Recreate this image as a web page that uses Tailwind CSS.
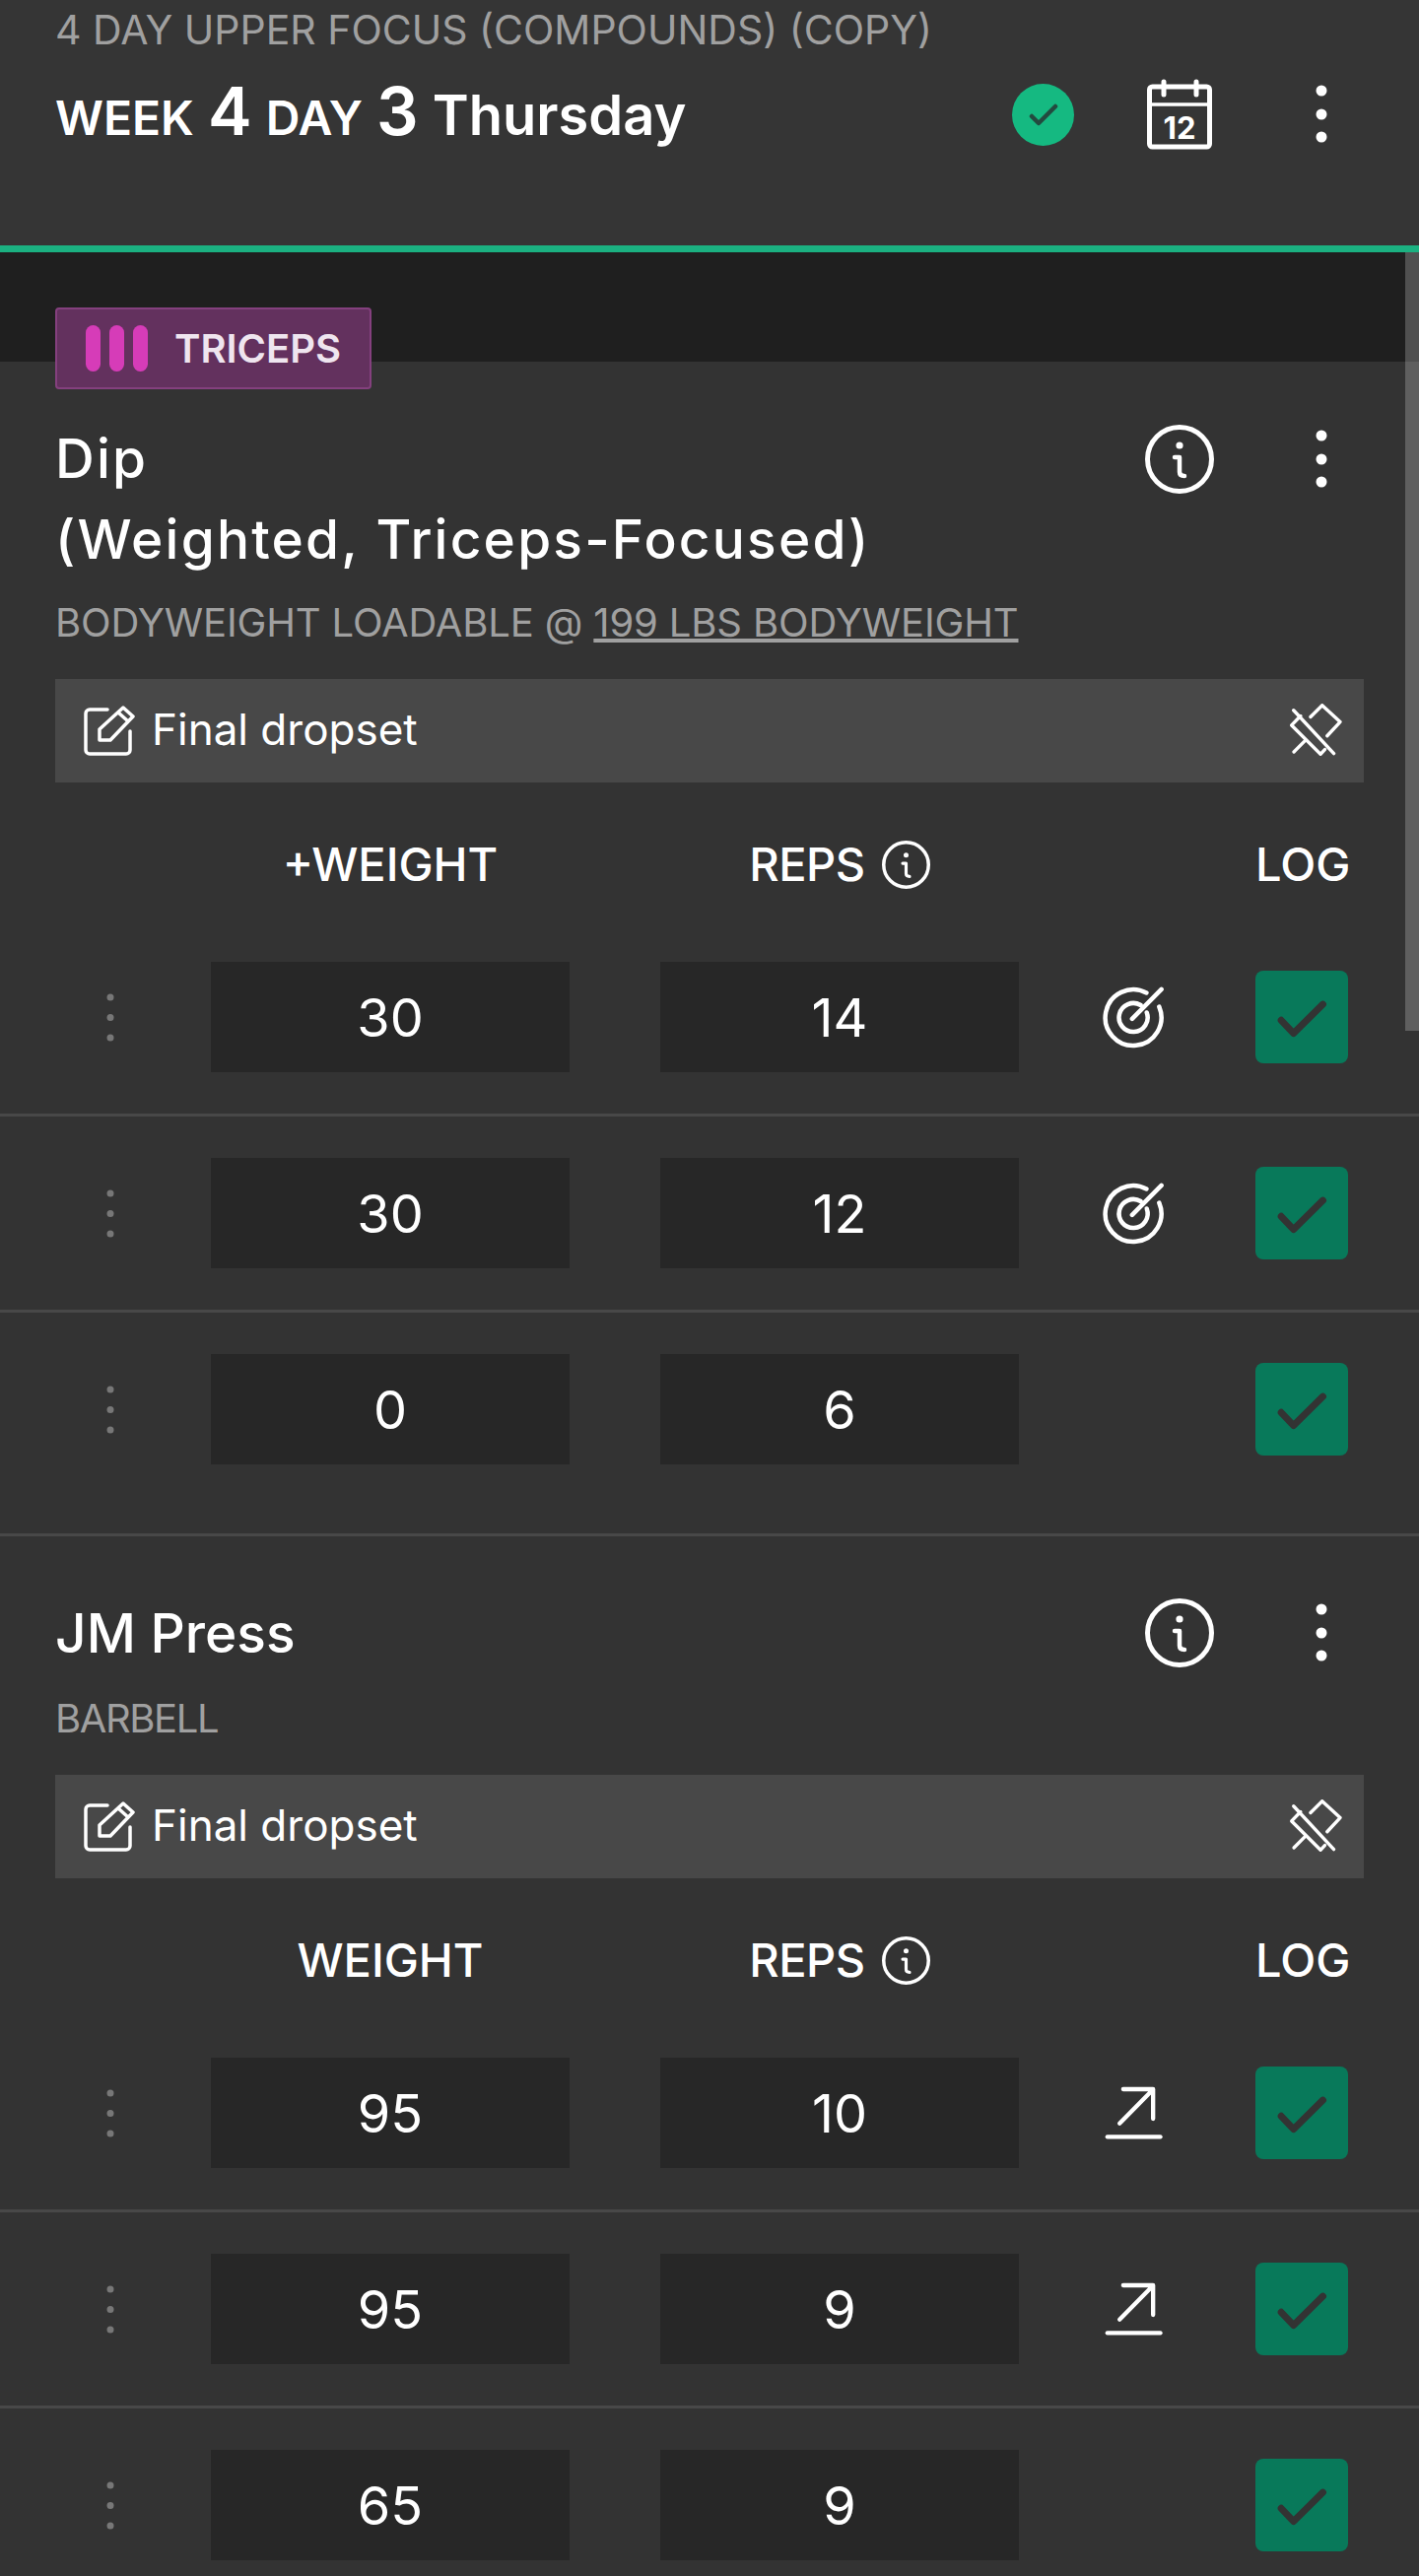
<!DOCTYPE html>
<html lang="en">
<head>
  <meta charset="UTF-8" />
  <meta name="viewport" content="width=device-width, initial-scale=1.0" />
  <title>Workout</title>
  <script src="https://cdn.jsdelivr.net/npm/@tailwindcss/browser@4"></script>
</head>
<body class="bg-[#333333] font-['Inter','Open_Sans',sans-serif] text-white">

<svg class="hidden">
  <symbol id="dots" viewBox="0 0 12 60"><circle cx="6" cy="6" r="5.5" fill="currentColor"/><circle cx="6" cy="30" r="5.5" fill="currentColor"/><circle cx="6" cy="53" r="5.5" fill="currentColor"/></symbol>
  <symbol id="grip" viewBox="0 0 8 49"><circle cx="4" cy="4" r="3.5" fill="#777777"/><circle cx="4" cy="24.5" r="3.5" fill="#777777"/><circle cx="4" cy="45" r="3.5" fill="#777777"/></symbol>
  <symbol id="info" viewBox="0 0 70 70"><circle cx="35" cy="35" r="32.5" fill="none" stroke="currentColor" stroke-width="5"/><circle cx="35" cy="21" r="3.6" fill="currentColor"/><path d="M30 33h5v15q0 4 5 4" fill="none" stroke="currentColor" stroke-width="4.5" stroke-linecap="round" stroke-linejoin="round"/></symbol>
  <symbol id="edit" viewBox="84 714 52 53"><path d="M108 719H90a4 4 0 0 0-4 4v37a4 4 0 0 0 4 4h37a4 4 0 0 0 4-4V741" fill="none" stroke="currentColor" stroke-width="3.5" stroke-linecap="round"/><path d="M100 750V739L124 717L134 726L111 750ZM119 722L129 731" fill="none" stroke="currentColor" stroke-width="3.5" stroke-linejoin="round"/></symbol>
  <symbol id="pinoff" viewBox="920 100 160 160"><g fill="none" stroke="currentColor" stroke-width="10" stroke-linecap="round" stroke-linejoin="round"><path d="M934 120L1055 250"/><path d="M985 140L1020 105L1074 155L1035 197"/><path d="M955 137L928 165L1015 252L1028 238"/><path d="M935 245L970 210"/></g></symbol>
  <symbol id="target" viewBox="350 960 200 195"><g fill="none" stroke="currentColor" stroke-width="14" stroke-linecap="round"><path d="M490 980A88 88 0 1 0 530 1024"/><path d="M472 1019A45 45 0 1 0 491 1042"/><path d="M445 1062L537 969"/></g></symbol>
  <symbol id="arrow" viewBox="180 175 176 162"><g fill="none" stroke="currentColor" stroke-width="13" stroke-linecap="round" stroke-linejoin="round"><path d="M225 288L327 185M236 184H327V274"/><path d="M188 329H349"/></g></symbol>
  <symbol id="tick" viewBox="822 913 282 284"><path d="M900 1065L938 1105L1028 1016" fill="none" stroke="#333333" stroke-width="21" stroke-linecap="round" stroke-linejoin="round"/></symbol>
</svg>

<div class="relative h-[2614px] w-[1440px] overflow-hidden">

  <!-- Top bar -->
  <header class="h-[256px] border-b-[7px] border-[#1bb181] bg-[#353535] pl-[56px] pr-[93px]">
    <div class="h-[60px] text-[41px] leading-[60px] text-[#a0a0a0] whitespace-nowrap">4 DAY UPPER FOCUS (COMPOUNDS) (COPY)</div>
    <div class="flex h-[112px] items-center justify-between">
      <h1 class="whitespace-nowrap font-semibold text-[56px] leading-[80px]"><span class="text-[48px]">WEEK</span> <span class="text-[67px]">4</span> <span class="text-[48px]">DAY</span> <span class="text-[67px]">3</span> Thursday</h1>
      <div class="flex items-center">
        <span class="flex h-[63px] w-[63px] items-center justify-center rounded-full bg-[#15b981]">
          <svg class="h-[30px] w-[30px]" viewBox="0 0 30 30"><path d="M3 17L10 24L27 7" fill="none" stroke="#234a3f" stroke-width="4.5" stroke-linecap="round" stroke-linejoin="round"/></svg>
        </span>
        <svg class="ml-[74px] h-[72px] w-[66px]" viewBox="0 0 66 72">
          <rect x="2.5" y="8" width="61" height="61" rx="3" fill="none" stroke="white" stroke-width="5"/>
          <path d="M2 26H64" stroke="white" stroke-width="3.5"/>
          <path d="M17 3V16M50 3V16" stroke="white" stroke-width="5" stroke-linecap="round"/>
          <text x="33" y="61" text-anchor="middle" fill="white" font-family="Inter" font-weight="700" font-size="31">12</text>
        </svg>
        <svg class="ml-[105px] h-[60px] w-[12px] text-white"><use href="#dots"/></svg>
      </div>
    </div>
  </header>

  <!-- scrollbar -->
  <div class="absolute right-0 top-[256px] z-20 h-[790px] w-[14px] bg-white/[0.22]"></div>

  <div class="h-[111px] bg-[#1f1f1f]"></div>

  <!-- Dip -->
  <section class="relative h-[1192px] border-b-[3px] border-[#484848]">
    <div class="absolute left-[56px] top-[-55px] flex h-[83px] w-[321px] items-center rounded-[4px] border-2 border-[#84407e] bg-[#63315e]">
      <span class="ml-[29px] h-[47px] w-[15px] rounded-full bg-[#d63cb8]"></span>
      <span class="ml-[9px] h-[47px] w-[15px] rounded-full bg-[#d63cb8]"></span>
      <span class="ml-[9px] h-[47px] w-[15px] rounded-full bg-[#d63cb8]"></span>
      <span class="ml-[27px] text-[40px] font-semibold text-[#efe5ef]">TRICEPS</span>
    </div>

    <div class="flex pl-[56px] pr-[93px] pt-[57px]">
      <h2 class="flex-1 text-[55px] font-medium leading-[82px] tracking-[2.2px]">Dip<br>(Weighted, Triceps-Focused)</h2>
      <svg class="mt-[7px] h-[70px] w-[70px] text-white"><use href="#info"/></svg>
      <svg class="ml-[103px] mt-[12px] h-[60px] w-[12px] text-white"><use href="#dots"/></svg>
    </div>
    <p class="mt-[14px] pl-[56px] text-[40px] leading-[60px] tracking-[-0.15px] text-[#a0a0a0]">BODYWEIGHT LOADABLE @ <span class="underline">199 LBS BODYWEIGHT</span></p>
    <div class="mx-[56px] mt-[27px] flex h-[105px] items-center justify-between bg-[#484848] pl-[29px] pr-[22px]">
      <div class="flex items-center gap-[17px]">
        <svg class="h-[53px] w-[52px]"><use href="#edit"/></svg>
        <span class="mb-[3px] text-[44px]">Final dropset</span>
      </div>
      <svg class="mb-[2px] h-[54px] w-[54px]"><use href="#pinoff"/></svg>
    </div>

    <div class="grid h-[140px] grid-cols-[214px_364px_92px_364px_240px_94px] items-center pt-[26px] text-[47px] font-medium">
      <span class="col-start-2 text-center">+WEIGHT</span>
      <span class="col-start-4 flex items-center justify-center gap-[17px] tracking-[-0.5px]">REPS<svg class="h-[49px] w-[49px]"><use href="#info"/></svg></span>
      <span class="col-start-6 text-center">LOG</span>
    </div>

    <div class="grid h-[199px] grid-cols-[214px_364px_92px_364px_240px_94px] items-center border-b-[3px] border-[#484848] text-[54px]">
      <svg class="ml-[108px] h-[49px] w-[8px]"><use href="#grip"/></svg>
      <div class="flex h-[112px] items-center justify-center bg-[#272727]">30</div>
      <div class="col-start-4 flex h-[112px] items-center justify-center bg-[#272727]">14</div>
      <svg class="ml-[84px] h-[63px] w-[65px]"><use href="#target"/></svg>
      <div class="h-[94px] rounded-[8px] bg-[#08795a]"><svg class="h-[94px] w-[94px]"><use href="#tick"/></svg></div>
    </div>
    <div class="grid h-[199px] grid-cols-[214px_364px_92px_364px_240px_94px] items-center border-b-[3px] border-[#484848] text-[54px]">
      <svg class="ml-[108px] h-[49px] w-[8px]"><use href="#grip"/></svg>
      <div class="flex h-[112px] items-center justify-center bg-[#272727]">30</div>
      <div class="col-start-4 flex h-[112px] items-center justify-center bg-[#272727]">12</div>
      <svg class="ml-[84px] h-[63px] w-[65px]"><use href="#target"/></svg>
      <div class="h-[94px] rounded-[8px] bg-[#08795a]"><svg class="h-[94px] w-[94px]"><use href="#tick"/></svg></div>
    </div>
    <div class="grid h-[196px] grid-cols-[214px_364px_92px_364px_240px_94px] items-center text-[54px]">
      <svg class="ml-[108px] h-[49px] w-[8px]"><use href="#grip"/></svg>
      <div class="flex h-[112px] items-center justify-center bg-[#272727]">0</div>
      <div class="col-start-4 flex h-[112px] items-center justify-center bg-[#272727]">6</div>
      <div class="col-start-6 h-[94px] rounded-[8px] bg-[#08795a]"><svg class="h-[94px] w-[94px]"><use href="#tick"/></svg></div>
    </div>
  </section>

  <!-- JM Press -->
  <section class="border-b-[3px] border-[#484848]">
    <div class="flex pl-[56px] pr-[93px] pt-[57px]">
      <h2 class="flex-1 text-[55px] font-medium leading-[82px]">JM Press</h2>
      <svg class="mt-[6px] h-[70px] w-[70px] text-white"><use href="#info"/></svg>
      <svg class="ml-[103px] mt-[11px] h-[60px] w-[12px] text-white"><use href="#dots"/></svg>
    </div>
    <p class="mt-[16px] pl-[56px] text-[40px] leading-[60px] tracking-[-1.4px] text-[#a0a0a0]">BARBELL</p>
    <div class="mx-[56px] mt-[27px] flex h-[105px] items-center justify-between bg-[#484848] pl-[29px] pr-[22px]">
      <div class="flex items-center gap-[17px]">
        <svg class="h-[53px] w-[52px]"><use href="#edit"/></svg>
        <span class="mb-[3px] text-[44px]">Final dropset</span>
      </div>
      <svg class="mb-[2px] h-[54px] w-[54px]"><use href="#pinoff"/></svg>
    </div>

    <div class="grid h-[140px] grid-cols-[214px_364px_92px_364px_240px_94px] items-center pt-[26px] text-[47px] font-medium">
      <span class="col-start-2 text-center">WEIGHT</span>
      <span class="col-start-4 flex items-center justify-center gap-[17px] tracking-[-0.5px]">REPS<svg class="h-[49px] w-[49px]"><use href="#info"/></svg></span>
      <span class="col-start-6 text-center">LOG</span>
    </div>

    <div class="grid h-[199px] grid-cols-[214px_364px_92px_364px_240px_94px] items-center border-b-[3px] border-[#484848] text-[54px]">
      <svg class="ml-[108px] h-[49px] w-[8px]"><use href="#grip"/></svg>
      <div class="flex h-[112px] items-center justify-center bg-[#272727]">95</div>
      <div class="col-start-4 flex h-[112px] items-center justify-center bg-[#272727]">10</div>
      <svg class="ml-[87px] h-[54px] w-[59px]"><use href="#arrow"/></svg>
      <div class="h-[94px] rounded-[8px] bg-[#08795a]"><svg class="h-[94px] w-[94px]"><use href="#tick"/></svg></div>
    </div>
    <div class="grid h-[199px] grid-cols-[214px_364px_92px_364px_240px_94px] items-center border-b-[3px] border-[#484848] text-[54px]">
      <svg class="ml-[108px] h-[49px] w-[8px]"><use href="#grip"/></svg>
      <div class="flex h-[112px] items-center justify-center bg-[#272727]">95</div>
      <div class="col-start-4 flex h-[112px] items-center justify-center bg-[#272727]">9</div>
      <svg class="ml-[87px] h-[54px] w-[59px]"><use href="#arrow"/></svg>
      <div class="h-[94px] rounded-[8px] bg-[#08795a]"><svg class="h-[94px] w-[94px]"><use href="#tick"/></svg></div>
    </div>
    <div class="grid h-[196px] grid-cols-[214px_364px_92px_364px_240px_94px] items-center text-[54px]">
      <svg class="ml-[108px] h-[49px] w-[8px]"><use href="#grip"/></svg>
      <div class="flex h-[112px] items-center justify-center bg-[#272727]">65</div>
      <div class="col-start-4 flex h-[112px] items-center justify-center bg-[#272727]">9</div>
      <div class="col-start-6 h-[94px] rounded-[8px] bg-[#08795a]"><svg class="h-[94px] w-[94px]"><use href="#tick"/></svg></div>
    </div>
  </section>
</div>

</body>
</html>
